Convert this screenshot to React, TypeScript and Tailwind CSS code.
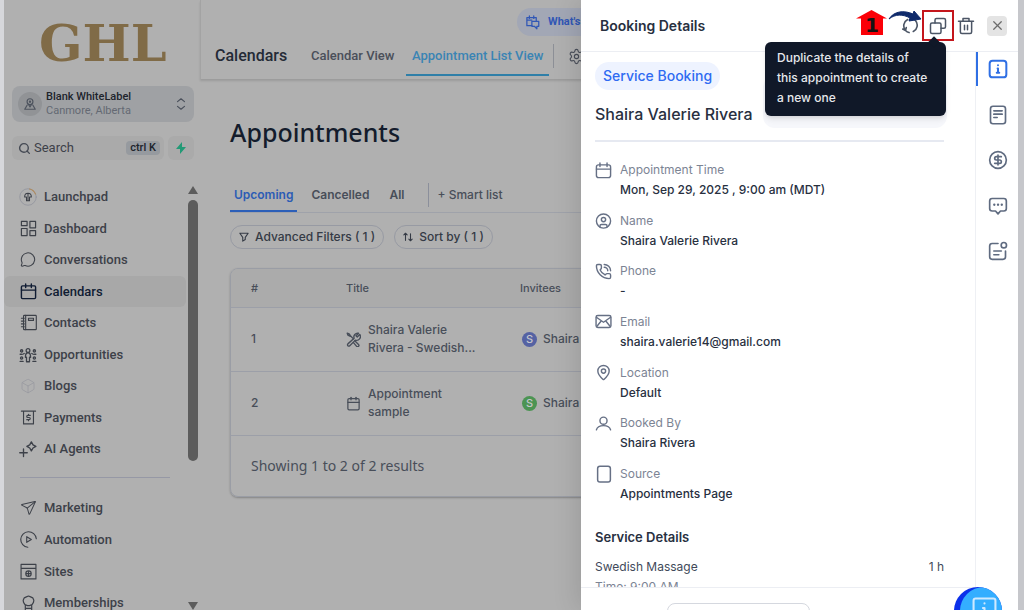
import type { ReactNode } from "react";
import { Box, Calendar, CircleDollarSign, CircleUser, MapPin, MessageCircle, PhoneCall, Search, Send, Settings, X } from "lucide-react";

type IconProps = { size?: number; stroke?: number; className?: string; children?: ReactNode };

function Svg({ size = 16, stroke = 2, className = "", children }: IconProps) {
    return (
        <svg width={size} height={size} viewBox="0 0 24 24" fill="none" stroke="currentColor" strokeWidth={stroke} strokeLinecap="round" strokeLinejoin="round" className={`shrink-0 ${className}`} aria-hidden="true">
            {children}
        </svg>
    );
}

const mainLinks = [
    {
        label: "Launchpad",
        icon: (
            <Svg size={18} stroke={1.4}>
                <circle cx="12" cy="12" r="11" stroke="#8f929c" strokeWidth={1} />
                <path d="M14 1.200A11 11 0 0 1 22 8" stroke="#b08a5c" />
                <path d="M10 17v-5H7.500c0-3 2-5 4.500-5s4.500 2 4.500 5H14v5zM12 7v10" />
            </Svg>
        ),
    },
    { label: "Dashboard", icon: <Svg size={17} stroke={1.7}><rect x="2" y="2" width="8" height="6" /><rect x="14" y="2" width="8" height="9" /><rect x="2" y="12" width="8" height="10" /><rect x="14" y="15" width="8" height="7" /></Svg> },
    { label: "Conversations", icon: <MessageCircle size={17} strokeWidth={1.6} /> },
    { label: "Calendars", icon: <Svg size={17}><rect x="2" y="4" width="20" height="18" rx="1.500" /><path d="M2 10h20M8 1.500v5M16 1.500v5" /></Svg>, active: true },
    {
        label: "Contacts",
        icon: (
            <Svg size={17} stroke={1.6}>
                <rect x="5" y="2" width="18" height="20" rx="1" />
                <path d="M8 2v20M12 6h7v3h-7zM2 6h4M2 10h4M2 14h4M2 18h4" />
            </Svg>
        ),
    },
    {
        label: "Opportunities",
        icon: (
            <Svg size={18} stroke={1.7}>
                <circle cx="12" cy="6" r="2.500" />
                <path d="M12 9c-3 0-3.500 2-3.500 6h1.500v6h4v-6h1.500c0-4-.5-6-3.500-6z" />
                <circle cx="3.500" cy="6.500" r="1.500" /><circle cx="20.500" cy="6.500" r="1.500" />
                <circle cx="3.500" cy="16" r="1.500" /><circle cx="20.500" cy="16" r="1.500" />
                <path d="M5 11l2-1M19 11l-2-1M1.500 20.500h4M18.500 20.500h4M1.500 11h2M20.500 11h2" />
            </Svg>
        ),
    },
    { label: "Blogs", icon: <Box size={18} strokeWidth={1} className="text-[#94969d]" /> },
    {
        label: "Payments",
        icon: (
            <Svg size={17} stroke={1.6}>
                <path d="M2 3h20M5 3v18h14V3" />
                <path d="M14.500 9h-3.500a1.500 1.500 0 0 0 0 3h2a1.500 1.500 0 0 1 0 3H9.500M12 7.500V9M12 15v1.500" />
            </Svg>
        ),
    },
    {
        label: "AI Agents",
        icon: (
            <Svg size={18} stroke={1.8}>
                <path d="M16.500 2.500l2.200 4 3.800 2-3.800 2.200-2.200 3.800-2.200-3.800-3.800-2.200 3.800-2z" />
                <path d="M6 12v10M1 17h10" />
            </Svg>
        ),
    },
];

const moreLinks = [
    { label: "Marketing", icon: <Send size={17} strokeWidth={1.5} className="rotate-6" /> },
    { label: "Automation", icon: <Svg size={17} stroke={1.6}><path d="M11 23A11 11 0 1 1 23 11" /><path d="M9.500 8l6.500 4-6.500 4z" /></Svg> },
    { label: "Sites", icon: <Svg size={17} stroke={1.6}><path d="M1.500 2h21v20.500h-21zM1.500 7.500h21" /><circle cx="12" cy="15" r="3.800" /><path d="M9 15h6M12 12v6" /></Svg> },
    { label: "Memberships", icon: <Svg size={17} stroke={1.7}><path d="M12 1.500l3 1.200 3 1.300 1.500 3.500-.5 3-2 3-3.500 1.500h-3L7 13.500l-2-3-.5-3L6 4l3-1.300zM7.500 14v8h9v-8M7.500 19h9" /></Svg> },
];

function NavItem({ label, icon, active }: { label: string; icon: ReactNode; active?: boolean }) {
    return (
        <li className="grid">
            <a href="#" className={`flex items-center gap-2 rounded-md pl-4 ${active ? "bg-[#a8a8a8] text-[#101c33]" : "text-[#3d4149]"}`}>
                <span className="flex w-4 justify-center">{icon}</span>
                <span>{label}</span>
            </a>
        </li>
    );
}

function Sidebar() {
    return (
        <aside className="flex w-[196px] shrink-0 flex-col font-[Roboto] text-[13px] font-medium">
            <div className="pt-3 pl-[35px] font-['DejaVu_Serif'] text-[51px] leading-[62px] font-bold text-[#806b47]">GHL</div>

            <button className="mt-3 mr-1.5 ml-2 flex h-9 items-center gap-1 rounded-lg bg-[#9fa1a4] px-1.5 text-left">
                <span className="flex size-6 items-center justify-center rounded-full bg-[#919396] text-[#4d535e]">
                    <Svg size={14}><circle cx="12" cy="8" r="5" /><circle cx="12" cy="8" r="1" /><path d="M9 12l3 5 3-5M7 14l-4 7h18l-4-7" /></Svg>
                </span>
                <span className="flex-1 text-[11px] leading-[14px]">
                    <span className="block text-[#20242c]">Blank WhiteLabel</span>
                    <span className="block font-normal text-[#646973]">Canmore, Alberta</span>
                </span>
                <Svg size={14} className="text-[#4a505b]"><path d="M6 8l6-5 6 5M6 16l6 5 6-5" /></Svg>
            </button>

            <div className="mt-3.5 mr-1.5 ml-2 flex h-6 gap-1">
                <label className="flex min-w-0 flex-1 items-center gap-[3px] rounded-md bg-[#aaaaaa] pr-1 pl-1.5">
                    <Search size={13} strokeWidth={2.6} className="shrink-0 text-[#454a54]" />
                    <input type="search" aria-label="Search" placeholder="Search" className="w-full min-w-0 bg-transparent font-normal outline-none placeholder:text-[#3d4149]" />
                    <kbd className="shrink-0 rounded-sm bg-[#969a9f] px-1 font-[Roboto] text-[11px] leading-[14px] text-[#20242c]">ctrl K</kbd>
                </label>
                <button aria-label="Quick actions" className="flex w-[26px] items-center justify-center rounded-md bg-[#aaaaaa] text-[#239a76]">
                    <svg width="12" height="12" viewBox="0 0 12 12" fill="currentColor"><path d="M7 0L1 7h4L5 12l6-7H7z" /></svg>
                </button>
            </div>

            <div className="mt-5 flex min-h-0 flex-1">
                <nav className="min-w-0 flex-1 overflow-hidden pt-px">
                    <ul className="grid h-[284px] auto-rows-fr">
                        {mainLinks.map((l) => <NavItem key={l.label} {...l} />)}
                    </ul>
                    <hr className="mt-3 mr-4 mb-3.5 ml-4 border-[#9698a5]" />
                    <ul className="grid h-[127px] auto-rows-fr">
                        {moreLinks.map((l) => <NavItem key={l.label} {...l} />)}
                    </ul>
                </nav>
                <div className="flex w-[14px] flex-col items-center pt-1.5 text-[#5c5c5c]">
                    <svg width="10" height="8" viewBox="0 0 10 8" fill="currentColor"><path d="M5 0l5 8H0z" /></svg>
                    <div className="mt-1.5 h-[261px] w-2.5 rounded-full bg-current" />
                    <svg width="10" height="8" viewBox="0 0 10 8" fill="currentColor" className="mt-auto"><path d="M0 0h10L5 8z" /></svg>
                </div>
            </div>
        </aside>
    );
}

function TopBar() {
    return (
        <header className="h-[79px] border-l border-[#a3a3a3] font-[Roboto] font-medium shadow-[0_2px_2px_rgba(0,0,0,0.12)]">
            <div className="flex h-9 pt-2 pl-[316px]">
                <a href="#" className="flex w-24 items-center gap-2 rounded-full bg-[#a2a7b5] px-2 text-[11px] font-bold text-[#3157b5]">
                    <Svg size={15}>
                        <path d="M11 17H3V4h15v5M7 1.500v4M14 1.500v4M3 8h8" />
                        <path d="M11 10h11v8h-3v4l-4-4h-4z" />
                    </Svg>
                    What's
                </a>
            </div>
            <div className="flex items-center pl-3.5 text-[13px] text-[#4a4f5a]">
                <h2 className="w-24 text-[16px] text-[#242a36]">Calendars</h2>
                <a href="#" className="w-[95px]">Calendar View</a>
                <a href="#" className="h-10 border-b-2 border-[#2f7fa8] px-1.5 leading-10 text-[#3a84b4]">Appointment List View</a>
                <span className="ml-1 h-6 w-px bg-[#8c8f96]" />
                <button aria-label="Settings" className="ml-3.5"><Settings size={17} strokeWidth={1.6} /></button>
            </div>
        </header>
    );
}

const appointments = [
    { id: 1, title: "Shaira Valerie Rivera - Swedish...", invitee: "Shaira", badge: "bg-[#5562a3]", service: true },
    { id: 2, title: "Appointment sample", invitee: "Shaira", badge: "bg-[#4c9453]" },
];

function Appointments() {
    return (
        <section className="pt-[35px] pl-[30px] font-[Inter] text-[12px] font-medium text-[#484e59]">
            <h1 className="font-['Noto_Sans'] text-[25px] leading-9 text-[#141c2c]">Appointments</h1>

            <div className="mt-[29px] flex h-[34px] items-stretch border-b border-[#9fa2aa] leading-5">
                <a href="#" className="border-b-2 border-[#2c5fb8] px-1 pt-1.5 font-semibold text-[#2c5cb5]">Upcoming</a>
                <a href="#" className="ml-3.5 pt-1.5 font-semibold">Cancelled</a>
                <a href="#" className="ml-5 pt-1.5 font-semibold">All</a>
                <span className="mt-1 ml-6 h-6 w-px bg-[#8b8f9b]" />
                <button className="ml-2 flex pt-1.5">+ Smart list</button>
            </div>

            <div className="mt-3 flex gap-2.5">
                <button className="flex h-6 items-center gap-1.5 rounded-full border border-[#979aa3] px-2 text-[#343a45]">
                    <Svg size={10} stroke={2.6}><path d="M2 3h20l-7 10v5l-6 4v-9z" /></Svg>
                    Advanced Filters ( 1 )
                </button>
                <button className="flex h-6 items-center gap-1.5 rounded-full border border-[#979aa3] px-2 text-[#343a45]">
                    <Svg size={10} stroke={2.6}><path d="M6 20V3L2 7M6 3l4 4M18 4v17l-4-4M18 21l4-4" /></Svg>
                    Sort by ( 1 )
                </button>
            </div>

            <div className="mt-[19px] overflow-hidden rounded-lg border border-[#9a9da5] shadow-[0_1px_2px_rgba(0,0,0,0.25)]">
                <table className="w-full table-fixed text-left">
                    <thead className="bg-[#ababab] text-[11px]">
                        <tr className="h-[38px]">
                            <th className="w-[115px] pl-5 font-medium">#</th>
                            <th className="w-[174px] font-medium">Title</th>
                            <th className="font-medium">Invitees</th>
                        </tr>
                    </thead>
                    <tbody>
                        {appointments.map((a) => (
                            <tr key={a.id} className="h-16 border-y border-[#9c9fa8]">
                                <td className="pl-5">{a.id}</td>
                                <td>
                                    <div className="flex w-[140px] items-center gap-[7px] leading-[18px]">
                                        {a.service ? (
                                            <Svg size={15} stroke={2.2}>
                                                <path d="M2 2l3 1 2 3 5 5M2 2l1 3 4 2M14 14l6 6a2 2 0 0 1-3 3l-5-6" />
                                                <path d="M22 4l-4 4-2-2 4-4a6 6 0 0 0-7 8L3 19a2 2 0 0 0 3 3l9-9a6 6 0 0 0 7-9z" />
                                            </Svg>
                                        ) : <Calendar size={15} className="shrink-0" />}
                                        {a.title}
                                    </div>
                                </td>
                                <td>
                                    <div className="flex items-center gap-1.5 pl-0.5">
                                        <span className={`flex size-[15px] items-center justify-center rounded-full text-[11px] text-[#c4c6cc] ${a.badge}`}>S</span>
                                        {a.invitee}
                                    </div>
                                </td>
                            </tr>
                        ))}
                    </tbody>
                </table>
                <p className="pl-5 font-['Noto_Sans'] text-[14px] leading-[60px] font-normal">Showing 1 to 2 of 2 results</p>
            </div>
        </section>
    );
}

const details = [
    { label: "Appointment Time", value: "Mon, Sep 29, 2025 , 9:00 am (MDT)", icon: <Svg size={17}><rect x="2" y="4" width="20" height="18" rx="3" /><path d="M2 10h20M7 1.500v5M17 1.500v5" /></Svg> },
    { label: "Name", value: "Shaira Valerie Rivera", icon: <CircleUser size={18} /> },
    { label: "Phone", value: "-", icon: <PhoneCall size={17} /> },
    { label: "Email", value: "shaira.valerie14@gmail.com", icon: <Svg size={17}><rect x="1.500" y="3.500" width="21" height="17" rx="2.500" /><path d="M2 6l10 7 10-7M2.500 19l6.500-8M21.500 19l-6.500-8" /></Svg> },
    { label: "Location", value: "Default", icon: <MapPin size={17} /> },
    { label: "Booked By", value: "Shaira Rivera", icon: <Svg size={17}><circle cx="12" cy="8" r="5" /><path d="M2 21c1-4 5-6 10-6s9 2 10 6" /></Svg> },
    { label: "Source", value: "Appointments Page", icon: <Svg size={18}><rect x="3.500" y="1.500" width="17" height="21" rx="3" /></Svg> },
];

const railItems = [
    { label: "Info", icon: <Svg size={20} stroke={2.4}><rect x="2" y="2" width="20" height="20" rx="3.500" /><path d="M12 7.500v.1M11.500 11.500h.5v5M10.500 16.500h3" /></Svg>, active: true },
    { label: "Notes", icon: <Svg size={20}><rect x="3" y="1.500" width="18" height="21" rx="3" /><path d="M7 7h10M7 11h10M7 15h4" /></Svg> },
    { label: "Payments", icon: <CircleDollarSign size={20} /> },
    { label: "Messages", icon: <Svg size={20}><path d="M5 3h14a3 3 0 0 1 3 3v9a3 3 0 0 1-3 3h-4l-3 3.500L9 18H5a3 3 0 0 1-3-3V6a3 3 0 0 1 3-3z" /><path d="M7.500 10.500h.1M12 10.500h.1M16.500 10.500h.1" strokeWidth={2.8} /></Svg> },
    { label: "Forms", icon: <Svg size={20}><path d="M12 3H5a3 3 0 0 0-3 3v13a3 3 0 0 0 3 3h13a3 3 0 0 0 3-3v-7" /><circle cx="19" cy="5" r="3.200" /><path d="M7 12h9M7 16.500h6" /></Svg> },
];

function DrawerHeader() {
    return (
        <header className="flex h-[52px] shrink-0 items-center border-b border-[#eceef3] pr-[11px] pl-[19px] text-[#4b5565]">
            <h2 className="mr-auto text-[14px] font-semibold text-[#28303f]">Booking Details</h2>
            <div className="relative">
                <button aria-label="Refresh" className="flex size-[18px] items-center justify-center">
                    <Svg size={17} stroke={2.3}><path d="M5 19A10 10 0 0 1 8 3.500M19 5a10 10 0 0 1-3 15.500M14 2a10 10 0 0 1 5 3M10 22a10 10 0 0 1-5-3M1 17l4 2 1-4" /></Svg>
                </button>
                {/* step marker pointing at the duplicate button */}
                <svg width="66" height="28" viewBox="0 0 66 28" className="absolute -top-2 -left-[45px]" aria-hidden="true">
                    <path d="M15.500 1L31 9.500h-4V26H5V9.500H0z" fill="#fb0007" />
                    <text x="9" y="23" fontFamily="DejaVu Sans" fontWeight="700" fontSize="20" fill="#141414">1</text>
                    <path d="M33 10C38 2 48 1 57 5l1-3 7 8-12 2 1-3C47 5 39 5 33 10z" fill="#0f2a6b" stroke="#0f2a6b" />
                </svg>
            </div>
            <div className="relative ml-[3px] flex h-[31px] w-8 items-center justify-center border-2 border-[#c4161c]">
                <button aria-label="Duplicate" aria-describedby="dup-tip">
                    <Svg size={18}><path d="M8 8V4a2 2 0 0 1 2-2h10a2 2 0 0 1 2 2v9a2 2 0 0 1-2 2h-4" /><rect x="2" y="8" width="14" height="14" rx="2" /></Svg>
                </button>
                <div role="tooltip" id="dup-tip" className="absolute top-[30px] right-1.5 z-10 w-[181px] rounded-md bg-[#101828] pt-1.5 pb-2 pl-3 text-[12px] leading-5 font-medium text-[#e6e8ec] shadow-md">
                    <span className="absolute -top-1 right-2 size-2 rotate-45 bg-[#101828]" />
                    Duplicate the details of<br />this appointment to create<br />a new one
                </div>
            </div>
            <button aria-label="Delete" className="ml-[3px]">
                <Svg size={18}><path d="M2 5.500h20M8 5V2h8v3M4.500 6v14a2 2 0 0 0 2 2h11a2 2 0 0 0 2-2V6M10 11v6M14 11v6" /></Svg>
            </button>
            <button aria-label="Close" className="ml-3 flex size-5 items-center justify-center rounded-sm bg-[#e4e4e4] text-[#6b6b6b]">
                <X size={15} />
            </button>
        </header>
    );
}

function BookingDrawer() {
    return (
        <aside className="absolute inset-y-0 right-0 flex w-[437px] flex-col bg-white font-[Inter] text-[12px] shadow-[-4px_0_24px_rgba(0,0,0,0.12)]">
            <DrawerHeader />
            <div className="flex min-h-0 flex-1">
                <div className="flex min-w-0 flex-1 flex-col">
                    <div className="min-h-0 flex-1 overflow-hidden pr-[31px] pl-3.5">
                        <div className="flex justify-between border-b-2 border-[#e6e9f1] pb-3">
                            <div className="pt-2.5">
                                <span className="inline-block rounded-full bg-[#eef3ff] px-2 text-[14px] leading-7 font-medium text-[#2f6bf2]">Service Booking</span>
                                <h3 className="mt-3 text-[16px] leading-6 font-medium text-[#28303f]">Shaira Valerie Rivera</h3>
                            </div>
                            <div className="mt-6 -mr-[3px] h-[52px] w-[184px] rounded-xl bg-[#f6f7fb]" />
                        </div>

                        <dl className="mt-[18px] flex h-[343px] flex-col justify-between">
                            {details.map((d) => (
                                <div key={d.label} className="flex gap-2">
                                    <span className="flex h-5 w-[17px] shrink-0 items-center justify-center text-[#667085]">{d.icon}</span>
                                    <div>
                                        <dt className="leading-5 text-[#7c8494]">{d.label}</dt>
                                        <dd className="leading-[19px] font-medium text-[#28303f]">{d.value}</dd>
                                    </div>
                                </div>
                            ))}
                        </dl>

                        <h4 className="mt-6 text-[13px] leading-5 font-semibold text-[#28303f]">Service Details</h4>
                        <div className="mt-2.5 flex justify-between leading-5 text-[#414a5a]">
                            <span>Swedish Massage</span>
                            <span>1 h</span>
                        </div>
                        <p className="leading-5 text-[#7c8494]">Time: 9:00 AM</p>
                    </div>
                    <footer className="h-[23px] shrink-0 overflow-hidden border-t border-[#eceef3] pt-[15px] pl-[86px]">
                        <button aria-label="Edit appointment" className="h-9 w-[143px] rounded-lg border border-[#d5d8df]" />
                    </footer>
                </div>

                <nav className="w-[43px] shrink-0 border-l border-[#eef0f4] text-[#5f6b80]">
                    <ul className="grid h-[228px] auto-rows-fr">
                        {railItems.map((r) => (
                            <li key={r.label}>
                                <button aria-label={r.label} className={`flex h-[34px] w-full items-center justify-center border-l-2 ${r.active ? "border-[#2f6fe4] text-[#2f6fe4]" : "border-transparent"}`}>{r.icon}</button>
                            </li>
                        ))}
                    </ul>
                </nav>
            </div>
            <button aria-label="Help" className="absolute top-[587px] right-4 size-12 overflow-hidden rounded-full bg-[#0b30ea]">
                <span className="absolute top-0 left-1.5 flex size-12 justify-center rounded-full bg-[#34aeff] pt-2.5 text-[#cfe9ff]">
                    <Svg size={25} stroke={2}><rect x="1.500" y="1.500" width="21" height="21" rx="2" /><path d="M12 6v.2M10.500 10.500H12v8M9.500 18.500h5" /></Svg>
                </span>
            </button>
        </aside>
    );
}

export default function App() {
    return (
        <div className="relative flex h-screen overflow-hidden border-r-[6px] border-l-4 border-r-[#c6c7cb] border-l-[#d6d7db] bg-[#b0b0b0]">
            <Sidebar />
            <main className="min-w-0 flex-1">
                <TopBar />
                <Appointments />
            </main>
            <BookingDrawer />
        </div>
    );
}
